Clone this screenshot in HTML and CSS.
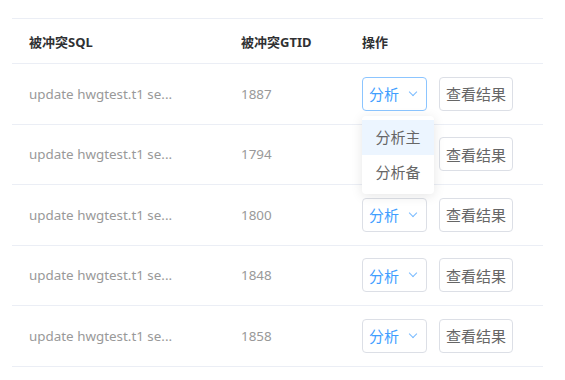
FILE: index.html
```html
<!DOCTYPE html>
<html lang="zh-CN">
<head>
  <meta charset="UTF-8" />
  <meta name="viewport" content="width=device-width, initial-scale=1.0"/>
  <title>冲突列表</title>
  <link rel="stylesheet" href="styles.css">
</head>
<body>
  <div class="conflict-table">
    <div class="row head">
      <div class="cell sql">被冲突SQL</div>
      <div class="cell gtid">被冲突GTID</div>
      <div class="cell ops">操作</div>
    </div>

    <div class="row">
      <div class="cell sql">update hwgtest.t1 se...</div>
      <div class="cell gtid">1887</div>
      <div class="cell ops">
        <div class="dropdown open">
          <button class="btn btn-analyse">分析 <span class="chevron"></span></button>
          <ul class="menu">
            <li class="hover">分析主</li>
            <li>分析备</li>
          </ul>
        </div>
        <button class="btn">查看结果</button>
      </div>
    </div>

    <div class="row">
      <div class="cell sql">update hwgtest.t1 se...</div>
      <div class="cell gtid">1794</div>
      <div class="cell ops">
        <div class="dropdown">
          <button class="btn btn-analyse">分析 <span class="chevron"></span></button>
        </div>
        <button class="btn">查看结果</button>
      </div>
    </div>

    <div class="row">
      <div class="cell sql">update hwgtest.t1 se...</div>
      <div class="cell gtid">1800</div>
      <div class="cell ops">
        <div class="dropdown">
          <button class="btn btn-analyse">分析 <span class="chevron"></span></button>
        </div>
        <button class="btn">查看结果</button>
      </div>
    </div>

    <div class="row">
      <div class="cell sql">update hwgtest.t1 se...</div>
      <div class="cell gtid">1848</div>
      <div class="cell ops">
        <div class="dropdown">
          <button class="btn btn-analyse">分析 <span class="chevron"></span></button>
        </div>
        <button class="btn">查看结果</button>
      </div>
    </div>

    <div class="row">
      <div class="cell sql">update hwgtest.t1 se...</div>
      <div class="cell gtid">1858</div>
      <div class="cell ops">
        <div class="dropdown">
          <button class="btn btn-analyse">分析 <span class="chevron"></span></button>
        </div>
        <button class="btn">查看结果</button>
      </div>
    </div>
  </div>
</body>
</html>
```

FILE: styles.css
```css
* { margin: 0; padding: 0; box-sizing: border-box; }

html, body {
  background: #fff;
  font-family: "Noto Sans", "Noto Sans CJK SC", sans-serif;
  font-size: 13.4px;
  color: #999;
}

.conflict-table {
  margin: 18px 22px 0 12px;
  border-top: 1px solid #ebeef5;
}

.row {
  display: flex;
  align-items: center;
  height: 60.5px;
  border-bottom: 1px solid #ebeef5;
}

.row.head {
  height: 45px;
  font-size: 13px;
  color: #303133;
  font-weight: bold;
  padding-top: 1px;
}

.cell {
  padding-left: 17px;
}

.sql { width: 212px; }
.gtid { width: 121px; }

.ops {
  flex: 1;
  display: flex;
  align-items: center;
  gap: 12px;
}

.btn {
  height: 34px;
  padding: 0 6px;
  font-family: inherit;
  font-size: 15px;
  color: #666;
  background: #fff;
  border: 1px solid #dcdfe6;
  border-radius: 4px;
  cursor: pointer;
}

.dropdown {
  position: relative;
}

.btn-analyse {
  width: 65px;
  color: #409eff;
  display: flex;
  align-items: center;
  justify-content: space-between;
  padding: 0 10px 0 6px;
}

.dropdown.open .btn-analyse {
  border-color: #8cc5ff;
}

.chevron {
  width: 6px;
  height: 6px;
  border-right: 1.2px solid #79bbff;
  border-bottom: 1.2px solid #79bbff;
  transform: rotate(45deg);
  margin-top: -4px;
}

/* dropdown menu */
.menu {
  position: absolute;
  top: 39px;
  left: 0;
  width: 72px;
  list-style: none;
  background: #fff;
  padding: 4px 0;
  border-radius: 4px;
  box-shadow: 0 2px 12px rgba(0, 0, 0, 0.1);
  z-index: 10;
}

.menu li {
  height: 35px;
  line-height: 35px;
  text-align: center;
  font-size: 15px;
  color: #666;
}

.menu li.hover {
  background: #ecf5ff;
}
```
